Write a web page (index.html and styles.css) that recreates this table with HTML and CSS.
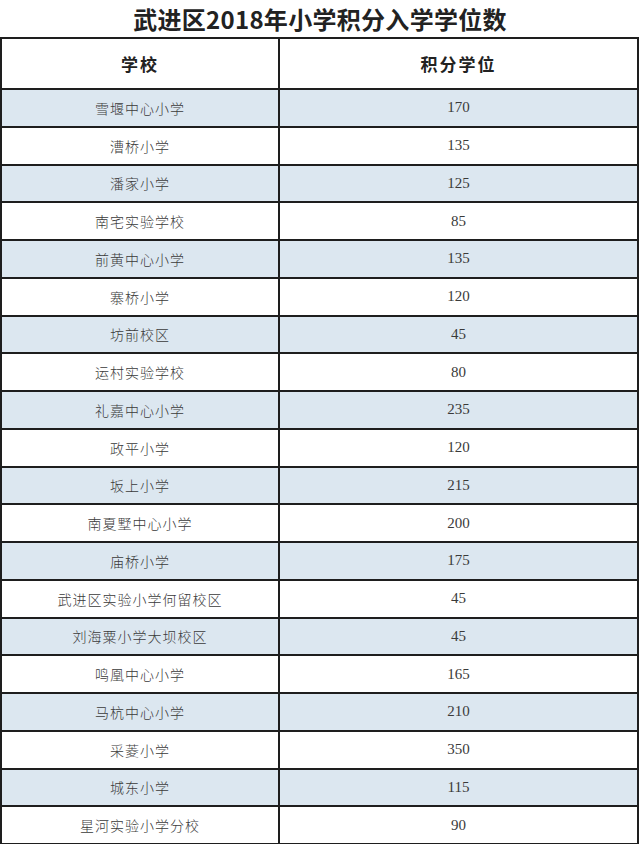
FILE: index.html
```html
<!DOCTYPE html>
<html lang="zh">
<head>
<meta charset="utf-8">
<title>武进区2018年小学积分入学学位数</title>
<link rel="stylesheet" href="styles.css">
</head>
<body>
<h1 class="title">武进区2018年小学积分入学学位数</h1>
<table class="grid">
  <thead>
    <tr class="head"><th class="c1">学校</th><th class="c2">积分学位</th></tr>
  </thead>
  <tbody>
    <tr class="alt"><td class="name">雪堰中心小学</td><td class="num">170</td></tr>
    <tr><td class="name">漕桥小学</td><td class="num">135</td></tr>
    <tr class="alt"><td class="name">潘家小学</td><td class="num">125</td></tr>
    <tr><td class="name">南宅实验学校</td><td class="num">85</td></tr>
    <tr class="alt"><td class="name">前黄中心小学</td><td class="num">135</td></tr>
    <tr><td class="name">寨桥小学</td><td class="num">120</td></tr>
    <tr class="alt"><td class="name">坊前校区</td><td class="num">45</td></tr>
    <tr><td class="name">运村实验学校</td><td class="num">80</td></tr>
    <tr class="alt"><td class="name">礼嘉中心小学</td><td class="num">235</td></tr>
    <tr><td class="name">政平小学</td><td class="num">120</td></tr>
    <tr class="alt"><td class="name">坂上小学</td><td class="num">215</td></tr>
    <tr><td class="name">南夏墅中心小学</td><td class="num">200</td></tr>
    <tr class="alt"><td class="name">庙桥小学</td><td class="num">175</td></tr>
    <tr><td class="name">武进区实验小学何留校区</td><td class="num">45</td></tr>
    <tr class="alt"><td class="name">刘海粟小学大坝校区</td><td class="num">45</td></tr>
    <tr><td class="name">鸣凰中心小学</td><td class="num">165</td></tr>
    <tr class="alt"><td class="name">马杭中心小学</td><td class="num">210</td></tr>
    <tr><td class="name">采菱小学</td><td class="num">350</td></tr>
    <tr class="alt"><td class="name">城东小学</td><td class="num">115</td></tr>
    <tr><td class="name">星河实验小学分校</td><td class="num">90</td></tr>
  </tbody>
</table>
</body>
</html>
```

FILE: styles.css
```css
html, body {
  margin: 0;
  padding: 0;
  background: #ffffff;
}

body {
  width: 640px;
  color: #333;
  font-family: "Noto Sans CJK SC", "Noto Sans", sans-serif;
}

.title {
  margin: 0;
  height: 37px;
  line-height: 37px;
  text-align: center;
  font-size: 24px;
  font-weight: 700;
  color: #222;
  letter-spacing: 0.3px;
}

.grid {
  width: 639px;
  border-collapse: collapse;
  table-layout: fixed;
}

.grid th,
.grid td {
  border: 2px solid #1e1e1e;
  text-align: center;
  vertical-align: middle;
  padding: 0;
}

.head {
  height: 51px;
}

.head th {
  font-size: 17px;
  font-weight: 700;
  color: #222;
  letter-spacing: 2px;
}

.c1 {
  width: 276px;
}

.grid tbody tr {
  height: 37.75px;
}

.alt {
  background: #dce7f0;
}

.name {
  font-family: "Noto Sans CJK SC", sans-serif;
  font-weight: 300;
  font-size: 14px;
  letter-spacing: 1px;
  color: #3a3a3a;
}

.num {
  font-family: "Liberation Serif", serif;
  font-size: 15px;
  color: #3a3a3a;
}
```
